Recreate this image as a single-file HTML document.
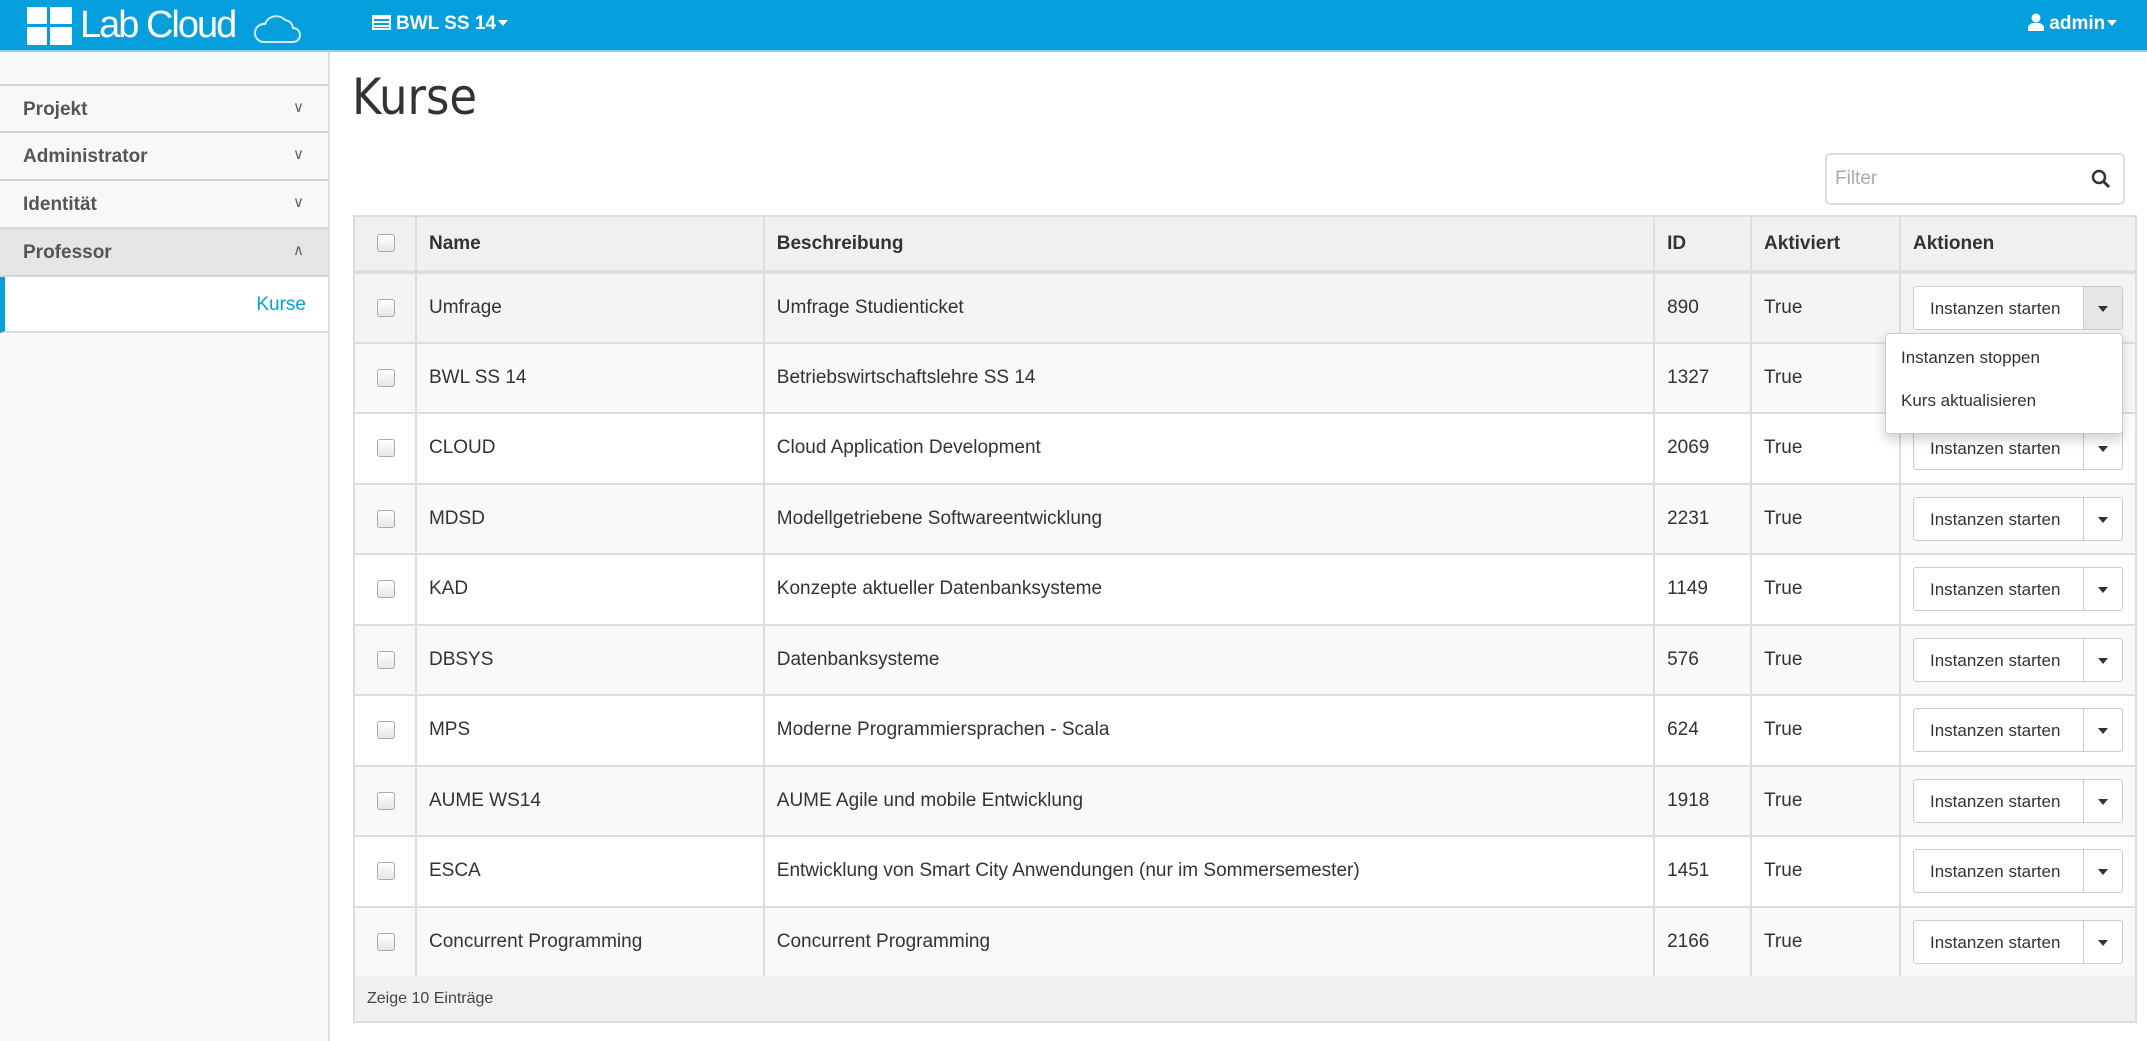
<!DOCTYPE html>
<html><head><meta charset="utf-8"><style>
*{box-sizing:border-box;margin:0;padding:0}
body{width:2147px;height:1041px;overflow:hidden;background:#fff;font-family:"Liberation Sans",sans-serif;color:#333;position:relative}
.nav{position:absolute;left:0;top:0;width:2147px;height:52px;background:#069fdd;border-bottom:2px solid #8fd0ee}
.logo{position:absolute;left:80px;top:4px;color:#fff;font-size:38px;letter-spacing:-2px;font-family:"Liberation Sans",sans-serif}
.proj{position:absolute;left:372px;top:13px;color:#fff;font-weight:bold;font-size:19px}
.admin{position:absolute;left:2028px;top:13px;color:#fff;font-weight:bold;font-size:19px}
.side{position:absolute;left:0;top:52px;width:330px;height:989px;background:#f8f8f8;border-right:2px solid #ddd}
.si{position:absolute;left:0;width:328px;height:48px;border-top:2px solid #d6d6d6;font-weight:bold;font-size:19px;color:#555;padding:13px 0 0 23px}
.si span{position:absolute;right:24px;top:12px;font-weight:normal;font-size:15px;color:#666}
.kurse{position:absolute;left:0;top:277px;width:328px;height:56px;background:#fff;border-left:5px solid #069fdd;border-bottom:2px solid #ddd;color:#069fdd;font-size:19px;text-align:right;padding:17px 22px 0 0}
h1{position:absolute;left:352px;top:68px;font-size:50px;font-weight:normal;font-family:"DejaVu Sans Condensed","Liberation Sans",sans-serif;color:#333}
.filter{position:absolute;left:1825px;top:153px;width:300px;height:52px;border:2px solid #ddd;border-radius:5px;color:#aaa;font-size:19px;padding:13px 0 0 8px}
table{position:absolute;left:353px;top:215px;width:1784px;border-collapse:collapse;font-size:19px}
td,th{border:2px solid #ddd;text-align:left;padding:0 12px;height:70.5px}
th{height:56px;background:#f0f0f0;font-weight:bold;border-bottom:4px solid #ddd}
tr:nth-child(odd) td{background:#f9f9f9}
tr.first td{background:#f4f4f4}
.cb{display:inline-block;width:18px;height:18px;border:1px solid #aaa;border-radius:3px;background:linear-gradient(#fff,#e6e6e6);vertical-align:middle;margin-left:10px}
.btn{display:inline-flex;height:44px;border:1px solid #ccc;border-radius:3px;background:#fff;font-size:17px;color:#333}
.btn .a{width:170px;padding:12px 0 0 16px;border-right:1px solid #ccc}
.btn .b{width:38px;position:relative}
.btn .b:after{content:"";position:absolute;left:14px;top:19px;border:5px solid transparent;border-top:6px solid #333;border-bottom:0}
.foot{position:absolute;left:353px;top:976px;width:1784px;height:47px;background:#f0f0f0;border:2px solid #ddd;border-top:none;font-size:16px;color:#444;padding:14px 0 0 12px}
.dd{position:absolute;left:1885px;top:333px;width:238px;height:101px;background:#fff;border:1px solid #ccc;border-radius:4px;box-shadow:0 6px 12px rgba(0,0,0,.18);font-size:17px;color:#333}
.dd div{padding:14px 0 0 15px;height:43px}
.car{display:inline-block;border:5px solid transparent;border-top:6px solid #fff;border-bottom:0;vertical-align:3px;margin-left:2px}
</style></head><body>
<div class="nav">
<svg style="position:absolute;left:27px;top:7px" width="45" height="38" viewBox="0 0 45 38"><g fill="#fff"><rect x="0" y="0" width="20" height="17"/><rect x="23" y="0" width="22" height="17"/><rect x="0" y="20" width="20" height="18"/><rect x="23" y="20" width="22" height="18"/></g></svg>
<div class="logo">Lab Cloud</div>
<svg style="position:absolute;left:253px;top:10px" width="48" height="34" viewBox="0 0 48 34"><path d="M10 32 H40 A7 7 0 0 0 40 18 A9 9 0 0 0 32 10 A12 12 0 0 0 12 14 A9 9 0 0 0 10 32Z" fill="none" stroke="#cfeefb" stroke-width="2"/></svg>
<div class="proj"><span style="display:inline-block;width:19px;height:15px;border:2px solid #fff;background:repeating-linear-gradient(#fff 0 2px,#069fdd 2px 4px);vertical-align:-1px;margin-right:5px"></span>BWL SS 14<span class="car"></span></div>
<div class="admin"><svg width="16" height="18" viewBox="0 0 16 18" style="vertical-align:-2px"><circle cx="8" cy="5" r="4.5" fill="#fff"/><path d="M0 18 V14 A6 5 0 0 1 6 10 H10 A6 5 0 0 1 16 14 V18Z" fill="#fff"/></svg> admin<span class="car"></span></div>
</div>
<div class="side">
<div class="si" style="top:32px">Projekt<span>∨</span></div>
<div class="si" style="top:79px">Administrator<span>∨</span></div>
<div class="si" style="top:127px">Identität<span>∨</span></div>
<div class="si" style="top:175px;background:#e5e5e5;height:50px;border-bottom:2px solid #d6d6d6">Professor<span>∧</span></div>
</div>
<div class="kurse">Kurse</div>
<h1>Kurse</h1>
<div class="filter">Filter<svg style="position:absolute;right:12px;top:14px" width="20" height="20" viewBox="0 0 20 20"><circle cx="8" cy="8" r="6" fill="none" stroke="#333" stroke-width="2.5"/><path d="M12.5 12.5 L18 18" stroke="#333" stroke-width="3"/></svg></div>
<table>
<tr><th style="width:62px"><span class="cb"></span></th><th style="width:348px">Name</th><th style="width:891px">Beschreibung</th><th style="width:97px">ID</th><th style="width:149px">Aktiviert</th><th>Aktionen</th></tr>
<tr class="first"><td><span class="cb"></span></td><td>Umfrage</td><td>Umfrage Studienticket</td><td>890</td><td>True</td><td><div class="btn"><div class="a">Instanzen starten</div><div class="b" style="background:#e6e6e6"></div></div></td></tr>
<tr><td><span class="cb"></span></td><td>BWL SS 14</td><td>Betriebswirtschaftslehre SS 14</td><td>1327</td><td>True</td><td><div class="btn"><div class="a">Instanzen starten</div><div class="b"></div></div></td></tr>
<tr><td><span class="cb"></span></td><td>CLOUD</td><td>Cloud Application Development</td><td>2069</td><td>True</td><td><div class="btn"><div class="a">Instanzen starten</div><div class="b"></div></div></td></tr>
<tr><td><span class="cb"></span></td><td>MDSD</td><td>Modellgetriebene Softwareentwicklung</td><td>2231</td><td>True</td><td><div class="btn"><div class="a">Instanzen starten</div><div class="b"></div></div></td></tr>
<tr><td><span class="cb"></span></td><td>KAD</td><td>Konzepte aktueller Datenbanksysteme</td><td>1149</td><td>True</td><td><div class="btn"><div class="a">Instanzen starten</div><div class="b"></div></div></td></tr>
<tr><td><span class="cb"></span></td><td>DBSYS</td><td>Datenbanksysteme</td><td>576</td><td>True</td><td><div class="btn"><div class="a">Instanzen starten</div><div class="b"></div></div></td></tr>
<tr><td><span class="cb"></span></td><td>MPS</td><td>Moderne Programmiersprachen - Scala</td><td>624</td><td>True</td><td><div class="btn"><div class="a">Instanzen starten</div><div class="b"></div></div></td></tr>
<tr><td><span class="cb"></span></td><td>AUME WS14</td><td>AUME Agile und mobile Entwicklung</td><td>1918</td><td>True</td><td><div class="btn"><div class="a">Instanzen starten</div><div class="b"></div></div></td></tr>
<tr><td><span class="cb"></span></td><td>ESCA</td><td>Entwicklung von Smart City Anwendungen (nur im Sommersemester)</td><td>1451</td><td>True</td><td><div class="btn"><div class="a">Instanzen starten</div><div class="b"></div></div></td></tr>
<tr><td><span class="cb"></span></td><td>Concurrent Programming</td><td>Concurrent Programming</td><td>2166</td><td>True</td><td><div class="btn"><div class="a">Instanzen starten</div><div class="b"></div></div></td></tr>
</table>
<div class="foot">Zeige 10 Einträge</div>
<div class="dd"><div>Instanzen stoppen</div><div>Kurs aktualisieren</div></div>
</body></html>
